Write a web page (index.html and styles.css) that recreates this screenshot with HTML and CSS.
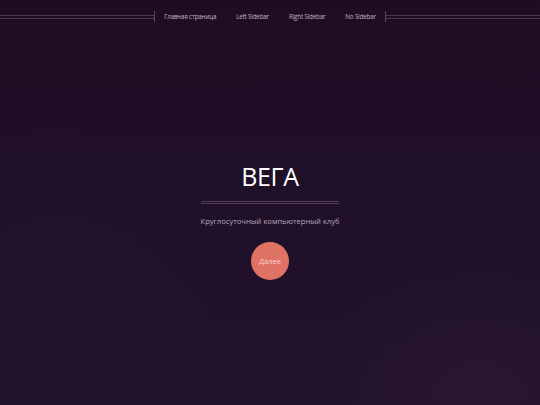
FILE: index.html
```html
<!DOCTYPE html>
<html lang="ru">
<head>
<meta charset="utf-8">
<title>ВЕГА</title>
<link rel="stylesheet" href="styles.css">
</head>
<body>
<div class="page">
  <header class="topbar">
    <div class="rule"></div>
    <nav class="nav">
      <a href="#">Главная страница</a>
      <a href="#">Left Sidebar</a>
      <a href="#">Right Sidebar</a>
      <a href="#">No Sidebar</a>
    </nav>
    <div class="rule"></div>
  </header>
  <main class="hero">
    <h1 class="title">ВЕГА</h1>
    <div class="double"></div>
    <p class="subtitle">Круглосуточный компьютерный клуб</p>
    <a class="more" href="#">Далее</a>
  </main>
</div>
</body>
</html>
```

FILE: styles.css
```css
html, body {
  margin: 0;
  padding: 0;
  height: 100%;
}
body {
  font-family: "Open Sans", "Noto Sans", sans-serif;
  background: #1f0f24;
  overflow: hidden;
}
.page {
  width: 540px;
  height: 405px;
  background:
    radial-gradient(ellipse 240px 180px at 480px 390px, rgba(60, 35, 65, 0.3), transparent 70%),
    radial-gradient(ellipse 220px 260px at 60px 300px, rgba(45, 25, 52, 0.25), transparent 70%),
    linear-gradient(180deg, #1e0d22 0%, #20102a 60%, #22122c 100%);
  display: flex;
  flex-direction: column;
}
.topbar {
  display: flex;
  align-items: center;
  height: 33px;
}
.rule {
  flex: 1;
  height: 2px;
  border-top: 1px solid #4c3652;
  border-bottom: 1px solid #4c3652;
}
.nav {
  display: flex;
  gap: 20px;
  padding: 0 9px;
  height: 11px;
  align-items: center;
  border-left: 1px solid #5a4560;
  border-right: 1px solid #5a4560;
}
.nav a {
  color: #c2b5c4;
  font-size: 6.2px;
  text-decoration: none;
  letter-spacing: -0.15px;
}
.hero {
  display: flex;
  flex-direction: column;
  align-items: center;
  padding-top: 128px;
}
.title {
  margin: 0;
  font-weight: 400;
  font-size: 25px;
  line-height: 30px;
  color: #ffffff;
  letter-spacing: -0.3px;
}
.double {
  margin-top: 10px;
  width: 138px;
  height: 1px;
  border-top: 1px solid #54405a;
  border-bottom: 1px solid #54405a;
}
.subtitle {
  margin: 11px 0 0;
  font-size: 7.6px;
  line-height: 12px;
  color: #b7a9b9;
}
.more {
  margin-top: 15px;
  width: 38px;
  height: 38px;
  border-radius: 50%;
  background: #df7265;
  color: #f6d5cf;
  font-size: 7.5px;
  text-decoration: none;
  display: flex;
  align-items: center;
  justify-content: center;
}
```
